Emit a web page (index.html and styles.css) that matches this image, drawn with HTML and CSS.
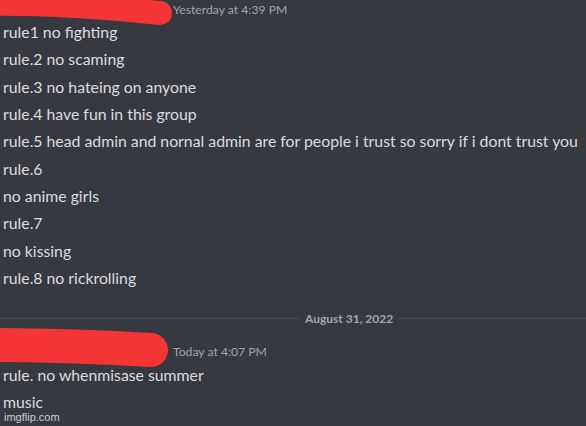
FILE: index.html
```html
<!DOCTYPE html>
<html lang="en">
<head>
    <meta charset="UTF-8">
    <meta name="viewport" content="width=device-width, initial-scale=1.0">
    <title>Rules</title>
    <link rel="stylesheet" href="styles.css">
</head>
<body>

    <div class="chat">
        <div class="group">
            <div class="header">
                <span class="name"></span>
                <span class="time">Yesterday at 4:39 PM</span>
            </div>
            <div class="line">rule1 no fighting</div>
            <div class="line">rule.2 no scaming</div>
            <div class="line">rule.3 no hateing on anyone</div>
            <div class="line">rule.4 have fun in this group</div>
            <div class="line">rule.5 head admin and nornal admin are for people i trust so sorry if i dont trust you</div>
            <div class="line">rule.6</div>
            <div class="line">no anime girls</div>
            <div class="line">rule.7</div>
            <div class="line">no kissing</div>
            <div class="line">rule.8 no rickrolling</div>
        </div>

        <div class="divider">
            <span class="rule left"></span>
            <span class="date">August 31, 2022</span>
            <span class="rule right"></span>
        </div>

        <div class="group">
            <div class="header">
                <span class="name"></span>
                <span class="time">Today at 4:07 PM</span>
            </div>
            <div class="line">rule. no whenmisase summer</div>
            <div class="line">music</div>
        </div>
    </div>

    <!-- scribbles over the names -->
    <svg class="scribble" width="586" height="426" viewBox="0 0 586 426">
        <path d="M-12 4 C40 3, 110 8, 160 13" stroke="#f43535" stroke-width="24" stroke-linecap="round" fill="none"/>
        <path d="M-20 345 C40 345, 100 347, 151 350" stroke="#f43535" stroke-width="34" stroke-linecap="round" fill="none"/>
    </svg>

    <div class="watermark">imgflip.com</div>

</body>
</html>
```

FILE: styles.css
```css
* {
    margin: 0;
    padding: 0;
    box-sizing: border-box;
}

body {
    font-family: 'Lato', sans-serif;
    background-color: #363940;
    color: #dcdddf;
    width: 586px;
    height: 426px;
    overflow: hidden;
    position: relative;
}

.chat {
    padding-left: 3px;
}

.header {
    display: flex;
    align-items: center;
    height: 18px;
}

/* the user name, hidden under the scribble */
.name {
    width: 170px;
}

.time {
    font-size: 12.2px;
    color: #a2a5aa;
}

.line {
    font-size: 15.8px;
    line-height: 27.35px;
    white-space: nowrap;
}

.divider {
    display: flex;
    align-items: center;
    gap: 5px;
    height: 16px;
    margin: 19.5px 0 16px -3px;
}

.divider .rule {
    height: 1px;
    background-color: #4a4d54;
}

.divider .left {
    flex: 0 0 300px;
}

.divider .right {
    flex: 1;
}

.date {
    font-size: 12px;
    font-weight: bold;
    color: #a2a5aa;
}

.scribble {
    position: absolute;
    top: 0;
    left: 0;
}

.watermark {
    position: absolute;
    left: 4px;
    bottom: 3px;
    font-family: 'Liberation Sans', sans-serif;
    font-size: 11px;
    color: rgba(255, 255, 255, 0.75);
}
```
